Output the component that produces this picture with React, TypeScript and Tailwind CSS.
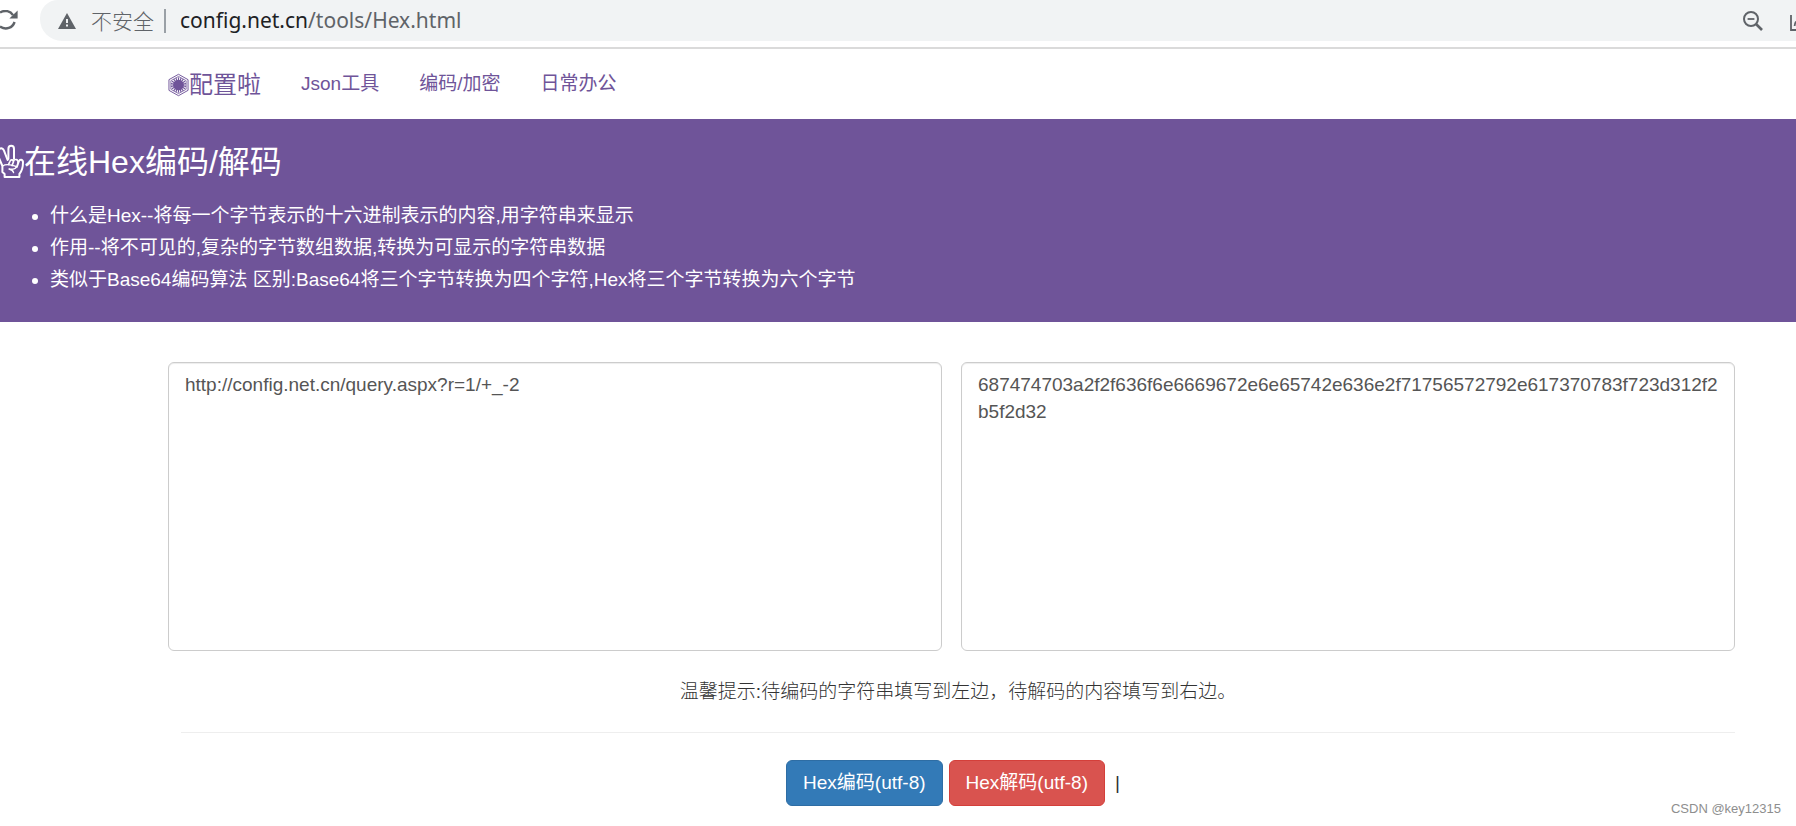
import { useState } from "react";

const navLinks = ["Json工具", "编码/加密", "日常办公"];

const notes = [
  "什么是Hex--将每一个字节表示的十六进制表示的内容,用字符串来显示",
  "作用--将不可见的,复杂的字节数组数据,转换为可显示的字符串数据",
  "类似于Base64编码算法 区别:Base64将三个字节转换为四个字符,Hex将三个字节转换为六个字节",
];

const rays = Array.from({ length: 18 }, (_, i) => i * 20);

function toHex(text: string) {
  return Array.from(new TextEncoder().encode(text))
    .map((b) => b.toString(16).padStart(2, "0"))
    .join("");
}

function fromHex(hex: string) {
  const bytes = (hex.match(/../g) || []).map((pair) => parseInt(pair, 16));
  return new TextDecoder().decode(new Uint8Array(bytes));
}

function ReloadIcon() {
  return (
    <svg className="w-[18px] h-5 shrink-0" viewBox="0 0 18 20" fill="none">
      <path
        d="M0 2.6 C5 -.6 10.5 1.2 13 5.2 M14.6 12 C12.6 17.8 6 20.6 0 16.6"
        stroke="#5f6368"
        strokeWidth="2.4"
      />
      <path d="M17.6 .4 V8.4 H9.4 Z" fill="#5f6368" />
    </svg>
  );
}

function WarningIcon() {
  return (
    <svg className="w-[18px] h-4 shrink-0" viewBox="0 0 18 16">
      <path d="M9 0 L18 16 H0 Z" fill="#5f6368" />
      <path d="M8 6 h2 v4 h-2 z M8 11.6 h2 v2 h-2 z" fill="#f1f3f4" />
    </svg>
  );
}

function ZoomOutIcon() {
  return (
    <svg className="size-5" viewBox="0 0 20 20" fill="none" stroke="#5f6368">
      <circle cx="8" cy="8" r="7" strokeWidth="2" />
      <path d="M4.6 8 h6.8" strokeWidth="1.8" />
      <path d="M13 13 L19 19" strokeWidth="2.6" />
    </svg>
  );
}

function ShareIcon() {
  return (
    <svg className="w-[6px] h-4" viewBox="0 0 6 16" fill="none" stroke="#5f6368">
      <path d="M1 0 V15 H6" strokeWidth="1.8" />
      <path d="M4.6 11 C4.8 9 5.2 7.6 6 6.4" strokeWidth="1.8" />
    </svg>
  );
}

function Logo() {
  return (
    <svg className="w-[21px] h-6" viewBox="0 0 22 24" fill="none" stroke="#6f5499">
      <path d="M11 .8 L21 6.4 V17.6 L11 23.2 L1 17.6 V6.4 Z" strokeWidth="1" />
      <path d="M11 3 L19 7.5 V16.5 L11 21 L3 16.5 V7.5 Z" strokeWidth=".8" />
      {rays.map((angle) => (
        <path
          key={angle}
          d="M11 12 V4"
          strokeWidth="1.2"
          transform={`rotate(${angle} 11 12)`}
        />
      ))}
      <circle cx="11" cy="12" r="5.6" fill="#6f5499" stroke="none" />
    </svg>
  );
}

function VictoryHand() {
  return (
    <svg
      className="w-6 h-9"
      viewBox="0 0 24 36"
      fill="none"
      stroke="white"
      strokeWidth="2"
      strokeLinecap="round"
      strokeLinejoin="round"
    >
      <path d="M-1 5.4 C1 3.4 3.2 4.4 4 6.6 L7.6 16" />
      <path d="M8.4 15 V5 C8.4 .8 14 .8 14 5 V15" />
      <path d="M-1 14 L2.4 22 V28 L4.6 30 V33 H19.4 V30 C22 27 23 22.4 23 18 C22.6 15 19.8 15 18.8 17.4 L16.8 23" />
      <path d="M8.6 20.4 L10 17.2 C10.8 15 13.8 15.6 13.4 18 L12 21.6" strokeWidth="1.6" />
      <path d="M13.4 17.6 C14.2 14.6 18.6 15 18 18.4" strokeWidth="1.6" />
      <path
        d="M2.6 22 C6 19.6 11 20.6 16 22.4 C16.4 25.4 12.6 25.4 9 25 C12 25.6 13.2 27 13.6 28.6"
        strokeWidth="1.3"
      />
    </svg>
  );
}

function AddressBar() {
  return (
    <div className="h-[49px] border-b-2 border-[#dadada] flex items-start overflow-hidden">
      <button aria-label="重新加载" className="w-10 pt-[10px]">
        <ReloadIcon />
      </button>
      <div className="flex-1 h-[41px] bg-[#f1f3f4] rounded-bl-[22px] rounded-tl-[18px] flex items-center pl-[18px] text-[21px] font-['Noto_Sans','Noto_Sans_CJK_SC',sans-serif]">
        <WarningIcon />
        <span className="ml-[15px] font-light text-[#5f6368] font-['Noto_Sans_CJK_SC',sans-serif]">
          不安全
        </span>
        <span className="ml-[10px] w-[2px] h-6 bg-[#9aa0a6]" />
        <span className="ml-[14px] text-[#202124]">config.net.cn</span>
        <span className="text-[#5f6368]">/tools/Hex.html</span>
        <button aria-label="缩小" className="ml-auto">
          <ZoomOutIcon />
        </button>
        <button aria-label="分享" className="ml-[27px] mt-1">
          <ShareIcon />
        </button>
      </div>
    </div>
  );
}

function Navbar() {
  return (
    <nav className="h-[70px] pl-[168px] flex items-center text-[#6f5499]">
      <a href="#" className="flex items-center text-2xl mr-5 pt-[2px]">
        <Logo />
        配置啦
      </a>
      {navLinks.map((link) => (
        <a key={link} href="#" className="px-5">
          {link}
        </a>
      ))}
    </nav>
  );
}

function App() {
  const [plain, setPlain] = useState("http://config.net.cn/query.aspx?r=1/+_-2");
  const [hex, setHex] = useState(
    "687474703a2f2f636f6e6669672e6e65742e636e2f71756572792e617370783f723d312f2b5f2d32"
  );

  const areaClass =
    "block w-full h-[289px] pl-4 pr-3 py-2 border border-[#cccccc] rounded-md resize-none outline-none text-[#555555] leading-[27px] break-all shadow-[inset_0_1px_1px_rgba(0,0,0,0.075)]";

  return (
    <div className="relative bg-white text-[19px] text-[#333333] font-['Liberation_Sans','Noto_Sans_CJK_SC',sans-serif]">
      <AddressBar />
      <Navbar />

      {/* Page title and notes */}
      <header className="bg-[#6f5499] text-white pt-[23px] pb-[26px]">
        <h1 className="flex items-center text-[32px] leading-10">
          <VictoryHand />
          在线Hex编码/解码
        </h1>
        <ul className="list-disc pl-[50px] pt-[18px] leading-8">
          {notes.map((note) => (
            <li key={note}>{note}</li>
          ))}
        </ul>
      </header>

      {/* Input and output */}
      <main className="pl-[168px] pr-[61px] pt-10">
        <div className="grid grid-cols-2 gap-[19px]">
          <textarea
            aria-label="待编码的字符串"
            className={areaClass}
            value={plain}
            spellCheck={false}
            onChange={(e) => setPlain(e.target.value)}
          />
          <textarea
            aria-label="待解码的内容"
            className={areaClass}
            value={hex}
            spellCheck={false}
            onChange={(e) => setHex(e.target.value)}
          />
        </div>

        <div className="pl-[13px] text-center">
          <p className="pt-[27px] leading-[27px] font-light">
            温馨提示:待编码的字符串填写到左边，待解码的内容填写到右边。
          </p>
          <hr className="mt-[27px] mb-[27px] border-[#eeeeee]" />
          <div className="flex items-center justify-center gap-[6px] pr-[10px] pb-5">
            <button
              onClick={() => setHex(toHex(plain))}
              className="h-[46px] px-4 rounded-md border border-[#2e6da4] bg-[#337ab7] text-white"
            >
              Hex编码(utf-8)
            </button>
            <button
              onClick={() => setPlain(fromHex(hex))}
              className="h-[46px] px-4 rounded-md border border-[#d43f3a] bg-[#d9534f] text-white"
            >
              Hex解码(utf-8)
            </button>
            <span className="ml-1">|</span>
          </div>
        </div>
      </main>

      <span className="absolute right-[15px] bottom-[7px] text-[13px] leading-5 text-[#8e8e8e]">
        CSDN @key12315
      </span>
    </div>
  );
}

export default App;
